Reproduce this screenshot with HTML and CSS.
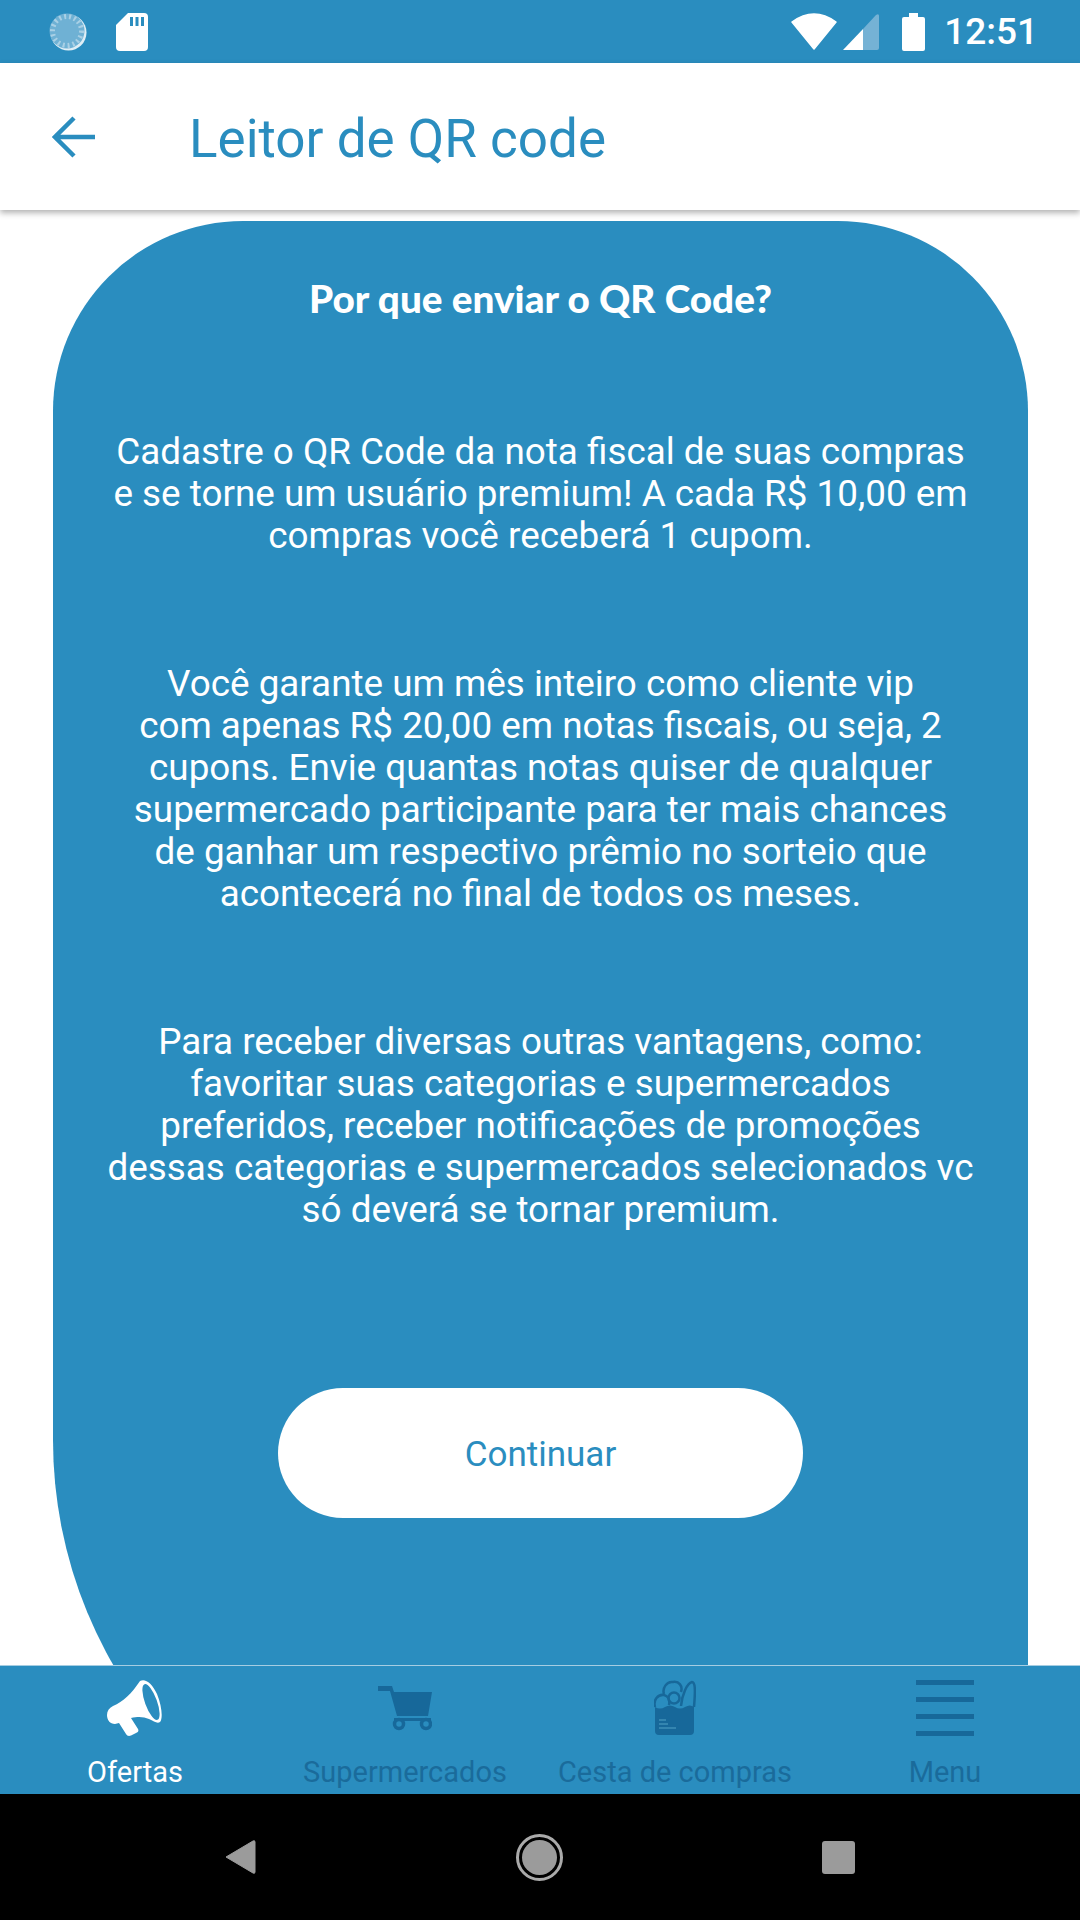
FILE: index.html
```html
<!DOCTYPE html>
<html lang="pt-br">
<head>
    <meta charset="UTF-8">
    <meta name="viewport" content="width=device-width, initial-scale=1.0">
    <title>Leitor de QR code</title>
    <link rel="stylesheet" href="styles.css">
</head>
<body>
    <div class="screen">
        <div class="status-bar">
            <div class="status-left">
                <svg class="icon-sync" width="38" height="38" viewBox="0 0 38 38">
                    <circle cx="19.5" cy="19.5" r="18" fill="#fff" opacity="0.85"/>
                    <circle cx="18" cy="18" r="17.5" fill="#6fb1d4"/>
                    <circle cx="18" cy="18" r="14.5" fill="none" stroke="#a9d0e5" stroke-width="5" stroke-dasharray="2 3"/>
                </svg>
                <svg width="32" height="38" viewBox="0 0 32 38">
                    <path d="M12 0H28Q32 0 32 4V34Q32 38 28 38H4Q0 38 0 34V12Z" fill="#fff"/>
                    <path d="M14 4h3v9h-3zM19.500 4h3v9h-3zM25 4h3v9h-3z" fill="#2a8dbf"/>
                </svg>
            </div>
            <div class="status-right">
                <svg width="46" height="37" viewBox="0 0 46 37">
                    <path d="M23 36L1 9Q23 -7 45 9Z" fill="#fff" stroke="#fff" stroke-width="1.500" stroke-linejoin="round"/>
                </svg>
                <svg class="icon-signal" width="36" height="36" viewBox="0 0 36 36">
                    <path d="M20 15L0 36H20Z" fill="#fff"/>
                    <path d="M20 15L33 1Q36 -1 36 2V34Q36 36 34 36H20Z" fill="#75b2d5"/>
                </svg>
                <svg class="icon-battery" width="23" height="38" viewBox="0 0 23 38">
                    <path d="M7 0H16V4H21Q23 4 23 6V36Q23 38 21 38H2Q0 38 0 36V6Q0 4 2 4H7Z" fill="#fff"/>
                </svg>
                <span class="clock">12:51</span>
            </div>
        </div>

        <div class="app-bar">
            <svg class="back-arrow" width="44" height="42" viewBox="0 0 44 42">
                <path d="M43 21H4M22 2L3 21L22 40" fill="none" stroke="#2a8dbf" stroke-width="4.500"/>
            </svg>
            <h1>Leitor de QR code</h1>
        </div>

        <div class="content">
            <div class="card">
                <h2>Por que enviar o QR Code?</h2>
                <p class="p-first">Cadastre o QR Code da nota fiscal de suas compras<br>e se torne um usuário premium! A cada R$ 10,00 em<br>compras você receberá 1 cupom.</p>
                <p>Você garante um mês inteiro como cliente vip<br>com apenas R$ 20,00 em notas fiscais, ou seja, 2<br>cupons. Envie quantas notas quiser de qualquer<br>supermercado participante para ter mais chances<br>de ganhar um respectivo prêmio no sorteio que<br>acontecerá no final de todos os meses.</p>
                <p>Para receber diversas outras vantagens, como:<br>favoritar suas categorias e supermercados<br>preferidos, receber notificações de promoções<br>dessas categorias e supermercados selecionados vc<br>só deverá se tornar premium.</p>
                <button type="button" class="btn-continuar">Continuar</button>
            </div>
        </div>

        <div class="tab-bar">
            <div class="tab active">
                <svg width="56" height="56" viewBox="0 0 56 56">
                    <path d="M33 1C38 -2 45 3 50 14C55 26 56 39 53 42C50 44 47 41 42 39C37 37 32 36 24 38L31 49C32 51 31 52 29 53L24 55.500C22 56.500 20 56 19 54L12 43L8 44C3 44 0 40 0 35C0 31 2 28 6 26C16 22 25 13 33 1Z" fill="#fff"/>
                    <ellipse cx="44" cy="22" rx="6" ry="19" transform="rotate(-20 44 22)" fill="#2a8dbf"/>
                </svg>
                <span>Ofertas</span>
            </div>
            <div class="tab">
                <svg width="54" height="56" viewBox="0 0 54 44">
                    <path d="M0 0H14L16 6H54L50 30H19L12 5H0Z" fill="#17689a"/>
                    <path d="M16 32H53V35H16Z" fill="#17689a"/>
                    <circle cx="21" cy="38" r="4.500" fill="none" stroke="#17689a" stroke-width="3.500"/>
                    <circle cx="48" cy="38" r="4.500" fill="none" stroke="#17689a" stroke-width="3.500"/>
                </svg>
                <span>Supermercados</span>
            </div>
            <div class="tab">
                <svg width="42" height="56" viewBox="0 0 42 56">
                    <path d="M1 27Q6 30 11 27T21 27T31 27T40 27V51Q40 55 36 55H5Q1 55 1 51Z" fill="#17689a"/>
                    <path d="M27 26C28 15 33 3 38 2C42 2 41 15 40 27" fill="none" stroke="#17689a" stroke-width="2.500"/>
                    <path d="M10 14C8 8 13 1 19 2C25 1 29 6 27 12" fill="none" stroke="#17689a" stroke-width="2.500"/>
                    <circle cx="20" cy="18" r="5.500" fill="none" stroke="#17689a" stroke-width="2.500"/>
                    <path d="M1 27C-1 20 4 14 10 15C14 16 16 20 15 25" fill="none" stroke="#17689a" stroke-width="2.500"/>
                    <path d="M5 40H12M5 44H14M5 48H22" stroke="#3f8fb8" stroke-width="1.500"/>
                </svg>
                <span>Cesta de compras</span>
            </div>
            <div class="tab">
                <div class="hamburger">
                    <i></i><i></i><i></i><i></i>
                </div>
                <span>Menu</span>
            </div>
        </div>

        <div class="nav-bar">
            <svg width="32" height="36" viewBox="0 0 32 36">
                <path d="M29 2L2 18L29 34Q31 35 31 33V3Q31 1 29 2Z" fill="#9b9b9b" stroke="#9b9b9b" stroke-width="1" stroke-linejoin="round"/>
            </svg>
            <div class="nav-home"><div></div></div>
            <div class="nav-square"></div>
        </div>
    </div>
</body>
</html>
```

FILE: styles.css
```css
body {
    margin: 0;
    font-family: Roboto, sans-serif;
    background-color: #fff;
}

.screen {
    width: 1080px;
    height: 1920px;
    display: flex;
    flex-direction: column;
    overflow: hidden;
}

.status-bar {
    height: 63px;
    flex-shrink: 0;
    background-color: #2a8dbf;
    display: flex;
    justify-content: space-between;
    align-items: center;
    padding: 0 42px 0 49px;
}

.status-left {
    display: flex;
    align-items: center;
    gap: 29px;
}

.status-right {
    display: flex;
    align-items: center;
}

.icon-signal {
    margin-left: 6px;
}

.icon-battery {
    margin-left: 23px;
}

.clock {
    margin-left: 19px;
    color: #fff;
    font-size: 37px;
    font-weight: 500;
}

.app-bar {
    height: 147px;
    flex-shrink: 0;
    background-color: #fff;
    display: flex;
    align-items: center;
    box-shadow: 0 3px 6px rgba(0, 0, 0, 0.3);
    position: relative;
    z-index: 1;
}

.back-arrow {
    margin-left: 52px;
}

.app-bar h1 {
    margin: 4px 0 0 93px;
    font-size: 53px;
    font-weight: 400;
    color: #2a8dbf;
}

.content {
    height: 1456px;
    flex-shrink: 0;
    box-sizing: border-box;
    overflow: hidden;
    padding: 11px 52px 0 53px;
    border-bottom: 1px solid #a5cde2;
}

.card {
    height: 1669px;
    box-sizing: border-box;
    background-color: #2a8dbf;
    border-radius: 190px 190px 0 450px;
    color: #fff;
    text-align: center;
    padding-top: 54px;
    display: flex;
    flex-direction: column;
    align-items: center;
}

.card h2 {
    margin: 0;
    font-family: Lato, sans-serif;
    font-size: 38.700px;
    font-weight: 900;
    line-height: 46px;
}

.card p {
    margin: 106px 0 0;
    font-size: 36.850px;
    line-height: 42px;
}

.card p.p-first {
    margin-top: 110px;
}

.btn-continuar {
    margin-top: 157px;
    width: 525px;
    height: 130px;
    padding-top: 3px;
    border: none;
    border-radius: 65px;
    background-color: #fff;
    color: #2a8dbf;
    font-family: Roboto, sans-serif;
    font-size: 35px;
}

.tab-bar {
    height: 128px;
    flex-shrink: 0;
    background-color: #2a8dbf;
    display: grid;
    grid-template-columns: repeat(4, 270px);
}

.tab {
    display: flex;
    flex-direction: column;
    align-items: center;
    color: #1a6b9b;
    font-size: 29px;
    height: 128px;
    padding-top: 14px;
    box-sizing: border-box;
}

.tab svg, .hamburger {
    height: 56px;
    flex-shrink: 0;
}

.tab span {
    margin-top: 20px;
    line-height: 32px;
    white-space: nowrap;
}

.tab.active {
    color: #fff;
}

.hamburger {
    width: 58px;
    display: flex;
    flex-direction: column;
    justify-content: space-between;
}

.hamburger i {
    display: block;
    height: 5px;
    background-color: #17689a;
}

.nav-bar {
    height: 126px;
    flex-shrink: 0;
    box-sizing: border-box;
    background-color: #000;
    display: flex;
    align-items: center;
    padding-left: 224px;
}

.nav-home {
    width: 47px;
    height: 47px;
    box-sizing: border-box;
    border: 3px solid #aaa;
    border-radius: 50%;
    margin-left: 260px;
    display: flex;
    align-items: center;
    justify-content: center;
}

.nav-home div {
    width: 35px;
    height: 35px;
    border-radius: 50%;
    background-color: #9b9b9b;
}

.nav-square {
    width: 33px;
    height: 33px;
    border-radius: 3px;
    background-color: #9b9b9b;
    margin-left: 259px;
}
```
